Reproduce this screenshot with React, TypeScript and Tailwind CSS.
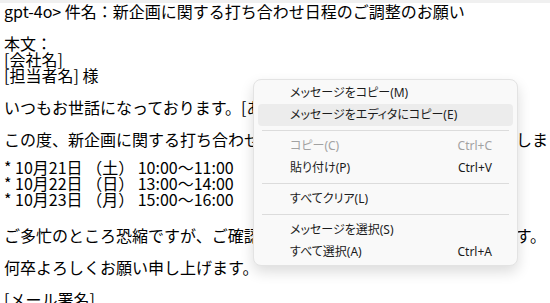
import React from 'react';

type MenuEntry =
  | { kind: 'item'; label: string; shortcut?: string; disabled?: boolean; active?: boolean }
  | { kind: 'sep' };

const menu: MenuEntry[] = [
  { kind: 'item', label: 'メッセージをコピー(M)' },
  { kind: 'item', label: 'メッセージをエディタにコピー(E)', active: true },
  { kind: 'sep' },
  { kind: 'item', label: 'コピー(C)', shortcut: 'Ctrl+C', disabled: true },
  { kind: 'item', label: '貼り付け(P)', shortcut: 'Ctrl+V' },
  { kind: 'sep' },
  { kind: 'item', label: 'すべてクリア(L)' },
  { kind: 'sep' },
  { kind: 'item', label: 'メッセージを選択(S)' },
  { kind: 'item', label: 'すべて選択(A)', shortcut: 'Ctrl+A' },
];

function Line({ children }: { children?: React.ReactNode }) {
  return <div className="h-4 leading-4 whitespace-pre">{children}</div>;
}

function ContextMenu() {
  return (
    <div className="absolute left-[253px] top-[79px] w-[265px] rounded-lg border border-[#e3e3e3] bg-[#f9f9f9] px-1 py-[2px] shadow-[0_6px_14px_rgba(0,0,0,0.14)] font-['Noto_Sans','Noto_Sans_CJK_JP',sans-serif] text-[12px] [font-feature-settings:'palt']">
      {menu.map((m, i) =>
        m.kind === 'sep' ? (
          <div key={i} className="flex h-[9px] items-center px-1">
            <div className="h-px w-full bg-[#dcdcdc]" />
          </div>
        ) : (
          <div
            key={i}
            className={`flex h-[22px] items-center rounded pl-[32px] pr-[21px] ${m.active ? 'bg-[#ececec]' : ''} ${m.disabled ? 'text-[#a2a2a2]' : 'text-[#1b1b1b]'}`}
          >
            <span className="flex-1">{m.label}</span>
            {m.shortcut && <span>{m.shortcut}</span>}
          </div>
        )
      )}
    </div>
  );
}

export default function App() {
  return (
    <div className="relative h-[303px] w-[550px] overflow-hidden bg-white">
      <div className="h-[3px] bg-[#f0f0f0]" />
      <div className="pl-[4px] font-['Noto_Sans_CJK_JP',sans-serif] text-[16px] text-black">
        <Line>gpt-4o&gt; 件名：新企画に関する打ち合わせ日程のご調整のお願い</Line>
        <Line />
        <Line>本文：</Line>
        <Line>[会社名]</Line>
        <Line>[担当者名] 様</Line>
        <Line />
        <Line>いつもお世話になっております。[あなたの名前]です。</Line>
        <Line />
        <Line>この度、新企画に関する打ち合わせの日程を調整したく、ご連絡をいたしました。</Line>
        <div className="h-3" />
        <Line>* 10月21日 （土） 10:00～11:00</Line>
        <Line>* 10月22日 （日） 13:00～14:00</Line>
        <Line>* 10月23日 （月） 15:00～16:00</Line>
        <div className="h-5" />
        <Line>ご多忙のところ恐縮ですが、ご確認の上、ご返信のほどお願いいたします。</Line>
        <Line />
        <Line>何卒よろしくお願い申し上げます。</Line>
        <Line />
        <Line>[メール署名]</Line>
      </div>
      <ContextMenu />
    </div>
  );
}
